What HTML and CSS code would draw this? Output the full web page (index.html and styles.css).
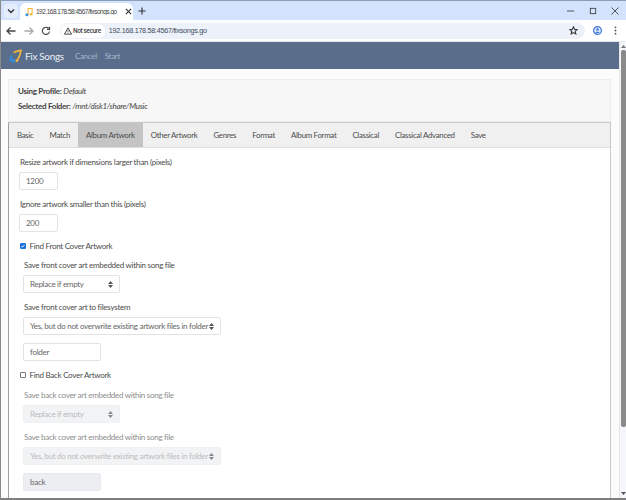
FILE: index.html
```html
<!DOCTYPE html>
<html lang="en">
<head>
<meta charset="utf-8">
<title>Fix Songs</title>
<link rel="stylesheet" href="styles.css">
</head>
<body>
<div class="window">
  <div class="tabstrip">
    <div class="tabmenu"><svg width="8" height="6" viewBox="0 0 8 6"><path d="M1 1.500l3 3 3-3" fill="none" stroke="#333" stroke-width="1.400"/></svg></div>
    <div class="browser-tab">
      <svg class="favicon" width="8" height="10" viewBox="0 0 9 11"><path d="M3.500 8V1.500h4.500v6" fill="none" stroke="#f2b632" stroke-width="1.200"/><circle cx="2.200" cy="8.500" r="1.700" fill="#3d8fd8"/><circle cx="6.800" cy="8" r="1.500" fill="#f2b632"/></svg>
      <span class="tab-title">192.168.178.58:4567/fixsongs.go</span>
      <svg class="tab-close" width="7" height="7" viewBox="0 0 8 8"><path d="M1 1l6 6M7 1l-6 6" stroke="#333" stroke-width="1.300"/></svg>
    </div>
    <svg class="newtab" width="8" height="8" viewBox="0 0 9 9"><path d="M4.500 0.500v8M0.500 4.500h8" stroke="#333" stroke-width="1.300"/></svg>
    <div class="winctl">
      <svg width="8" height="8" viewBox="0 0 9 9"><path d="M0 4.500h8" stroke="#444" stroke-width="1"/></svg>
      <svg width="8" height="8" viewBox="0 0 9 9"><rect x="1.500" y="1.500" width="6" height="6" fill="none" stroke="#444" stroke-width="1"/></svg>
      <svg width="8" height="8" viewBox="0 0 9 9"><path d="M.5 .5l8 8M8.500 .5l-8 8" stroke="#444" stroke-width="1"/></svg>
    </div>
  </div>
  <div class="toolbar">
    <svg width="10" height="10" viewBox="0 0 10 10"><path d="M9.500 5H1M4.500 1.500L1 5l3.500 3.500" fill="none" stroke="#444" stroke-width="1.300"/></svg>
    <svg width="10" height="10" viewBox="0 0 10 10"><path d="M.5 5H9M5.500 1.500L9 5 5.500 8.500" fill="none" stroke="#a8a8a8" stroke-width="1.300"/></svg>
    <svg width="10" height="10" viewBox="0 0 10 10"><path d="M8.500 5.500A3.600 3.600 0 1 1 7.500 2.300M8.500 .8v2.500H6" fill="none" stroke="#444" stroke-width="1.200"/></svg>
    <div class="omnibox">
      <div class="secure">
        <svg width="8" height="8" viewBox="0 0 9 9"><path d="M4.500 1L.5 8h8z" fill="none" stroke="#333" stroke-width="1"/><path d="M4.500 3.500v2.200M4.500 6.300v.8" stroke="#333" stroke-width=".8"/></svg>
        <span>Not secure</span>
      </div>
      <span class="url">192.168.178.58:4567/fixsongs.go</span>
      <svg class="star" width="9" height="9" viewBox="0 0 10 10"><path d="M5 1l1.200 2.700 2.900.3-2.200 1.900.7 2.900L5 7.300 2.400 8.800l.7-2.900L.9 4l2.900-.3z" fill="none" stroke="#333" stroke-width="1.200"/></svg>
    </div>
    <svg class="profile" width="9" height="9" viewBox="0 0 11 11"><circle cx="5.500" cy="5.500" r="4.800" fill="#dbe6fb" stroke="#3f78d8" stroke-width="1.400"/><circle cx="5.500" cy="4.200" r="1.500" fill="#3f78d8"/><path d="M2.800 8.500c.8-2 4.600-2 5.400 0" fill="#3f78d8"/></svg>
    <svg class="kebab" width="3" height="9" viewBox="0 0 3 10"><circle cx="1.500" cy="1.500" r="1" fill="#555"/><circle cx="1.500" cy="5" r="1" fill="#555"/><circle cx="1.500" cy="8.500" r="1" fill="#555"/></svg>
  </div>
  <div class="viewport">
    <div class="page">
      <nav class="navbar">
        <svg class="logo" width="13" height="14" viewBox="0 0 14 15"><path d="M5 4C7 2.500 10 2 13 1.500C12.500 5 11 9 8.500 13" fill="none" stroke="#f0b43a" stroke-width="1.800"/><path d="M3.500 7C2 9 1 11 1 13" fill="none" stroke="#2f8fe0" stroke-width="2"/><circle cx="4.500" cy="12.500" r="2" fill="#2f8fe0"/><circle cx="8.500" cy="12.500" r="1.500" fill="#f0b43a"/></svg>
        <span class="brand">Fix Songs</span>
        <a class="navlink">Cancel</a>
        <a class="navlink">Start</a>
      </nav>
      <div class="container">
        <section class="summary">
          <p><b>Using Profile:</b> <i>Default</i></p>
          <p><b>Selected Folder:</b> <i>/mnt/disk1/share/Music</i></p>
        </section>
        <section class="panel">
          <div class="tabs">
            <a>Basic</a><a>Match</a><a class="active">Album Artwork</a><a>Other Artwork</a><a>Genres</a><a>Format</a><a>Album Format</a><a>Classical</a><a>Classical Advanced</a><a>Save</a>
          </div>
          <div class="tabbody">
            <label class="lbl">Resize artwork if dimensions larger than (pixels)</label>
            <input class="ctl w-num" value="1200">
            <label class="lbl">Ignore artwork smaller than this (pixels)</label>
            <input class="ctl w-num" value="200">
            <label class="check"><input type="checkbox" checked> Find Front Cover Artwork</label>
            <div class="group">
              <label class="lbl">Save front cover art embedded within song file</label>
              <select class="ctl sel w-short"><option>Replace if empty</option></select>
              <label class="lbl">Save front cover art to filesystem</label>
              <select class="ctl sel w-long"><option>Yes, but do not overwrite existing artwork files in folder</option></select>
              <input class="ctl w-name" value="folder">
            </div>
            <label class="check"><input type="checkbox"> Find Back Cover Artwork</label>
            <div class="group off">
              <label class="lbl">Save back cover art embedded within song file</label>
              <select class="ctl sel w-short" disabled><option>Replace if empty</option></select>
              <label class="lbl">Save back cover art embedded within song file</label>
              <select class="ctl sel w-long" disabled><option>Yes, but do not overwrite existing artwork files in folder</option></select>
              <input class="ctl w-name" value="back" disabled>
            </div>
          </div>
        </section>
      </div>
    </div>
    <div class="scrollbar">
      <svg width="7" height="5" viewBox="0 0 7 5"><path d="M3.500 1L1 4h5z" fill="#777"/></svg>
      <div class="thumb"></div>
      <svg width="7" height="5" viewBox="0 0 7 5"><path d="M3.500 4L1 1h5z" fill="#555"/></svg>
    </div>
  </div>
</div>
</body>
</html>
```

FILE: styles.css
```css
* { box-sizing: border-box; }
html, body { margin: 0; padding: 0; height: 100%; overflow: hidden; }
body { font-family: "Lato", "Liberation Sans", sans-serif; color: #4a4a4a; }
.window {
  width: 626px; height: 500px; display: flex; flex-direction: column;
  border-top: 1px solid #8f9fb3; border-left: 1px solid #8a8a8a; border-bottom: 2px solid #7f7f7f;
  background: #fff; overflow: hidden;
}
.tabstrip { height: 19px; flex: none; background: #d3e3fd; display: flex; align-items: center; padding-left: 3px; }
.tabmenu { width: 14px; height: 14px; border-radius: 4px; background: #e4edfc; display: flex; align-items: center; justify-content: center; }
.browser-tab {
  width: 113px; height: 17px; margin-top: 2px; margin-left: 2px; background: #fff; border-radius: 6px 6px 0 0;
  display: flex; align-items: center; padding-left: 5px; gap: 3px;
}
.favicon { flex: none; }
.tab-title { font: 6.5px "Liberation Sans", sans-serif; letter-spacing: -0.5px; color: #444; width: 84px; white-space: nowrap; overflow: hidden; }
.tab-close { margin-left: 2px; flex: none; }
.newtab { margin-left: 5px; }
.winctl { margin-left: auto; display: flex; gap: 14px; padding-right: 7px; }
.toolbar { height: 22px; flex: none; background: #fff; display: flex; align-items: center; padding-left: 5px; gap: 7.5px; border-bottom: 1px solid #e3e8ef; }
.omnibox { margin-left: 1.5px; width: 525px; height: 16px; background: #edf2fa; border-radius: 8px; display: flex; align-items: center; padding: 0 0 0 1px; }
.secure { height: 14px; background: #fff; border-radius: 7px; display: flex; align-items: center; gap: 1px; padding: 0 4px 0 3px; font: 500 6.5px "Roboto", sans-serif; letter-spacing: -0.38px; color: #444; }
.url { margin-left: 4px; font: 7.2px "Liberation Sans", sans-serif; letter-spacing: -0.27px; color: #3c4b5c; }
.star { margin-left: auto; margin-right: 7.5px; }
.kebab { margin-left: 4.5px; }
.viewport { flex: 1; min-height: 0; display: flex; }
.page { flex: 1; min-width: 0; overflow: hidden; background: #fbfbfb; }
.scrollbar { width: 7px; flex: none; background: #f4f6fb; display: flex; flex-direction: column; align-items: center; justify-content: space-between; padding: 2px 0; border-left: 1px solid #e6e6e6; }
.thumb { width: 5px; height: 377px; margin-bottom: auto; background: #8a8a8a; border-radius: 2px; margin-top: 1px; }
.navbar { height: 27px; background: #5a6e8c; display: flex; align-items: center; padding-left: 8px; }
.brand { margin-left: 3px; font-size: 10px; letter-spacing: -0.32px; color: #e8edf3; }
.navlink { margin-left: 8px; font-size: 8px; letter-spacing: -0.3px; color: #a7b4c6; }
.navlink:first-of-type { margin-left: 11px; }
.container { padding: 10px 8px 0 7px; }
.summary { height: 43px; background: #f7f7f7; border: 1px solid #eee; padding: 6px 9px; font-size: 8px; letter-spacing: -0.28px; color: #444; }
.summary p { margin: 0 0 4px; line-height: 11px; }
.panel { border: 1px solid #c8c8c8; border-left-color: #a0a0a0; background: #fff; }
.tabs { height: 25px; background: #f0f0f0; border-bottom: 1px solid #ddd; display: flex; font-size: 7.9px; letter-spacing: -0.31px; }
.tabs a { padding: 0 8px; line-height: 25px; color: #4c4c4c; }
.tabs a.active { background: #c4c4c4; }
.tabbody { padding: 8px 0 0 11px; }
.lbl { display: block; font-size: 8px; letter-spacing: -0.28px; line-height: 12px; color: #4c4c4c; margin-bottom: 4px; }
.ctl { display: block; height: 18px; margin-left: -1px; font: 8px "Lato", sans-serif; letter-spacing: -0.28px; color: #666; background: #fff; border: 1px solid #e3e3e3; border-radius: 2px; padding: 0 6px; margin-bottom: 8px; }
.w-num { width: 39px; }
.w-short { width: 97px; }
.w-long { width: 198px; }
.w-name { width: 78px; }
.sel { appearance: none; -webkit-appearance: none; padding-right: 10px; background-image: url("data:image/svg+xml,%3Csvg xmlns='http://www.w3.org/2000/svg' width='5' height='7'%3E%3Cpath d='M2.500 0L5 3H0zM2.500 7L0 4h5z' fill='%23555'/%3E%3C/svg%3E"); background-repeat: no-repeat; background-position: right 6px center; }
.check { display: flex; align-items: center; gap: 3.5px; font-size: 8px; letter-spacing: -0.28px; line-height: 12px; color: #4c4c4c; margin: 0 0 7px; }
.check input { appearance: none; -webkit-appearance: none; margin: 0; width: 6px; height: 6px; border: 1px solid #777; border-radius: 1px; background: #fff; flex: none; }
.check input:checked { border-color: #1a6fe0; background: #1a6fe0 url("data:image/svg+xml,%3Csvg xmlns='http://www.w3.org/2000/svg' width='4' height='4'%3E%3Cpath d='M.5 2l1 1.200L3.500 .8' fill='none' stroke='%23fff' stroke-width='.9'/%3E%3C/svg%3E") center no-repeat; }
.group { padding-left: 4px; }
.off { margin-top: 8px; }
.off .lbl { color: #8d8d8d; }
.off .ctl { background-color: #eceef1; border-color: #e8eaed; color: #a0a0a0; }
.off input.ctl { color: #666; }
```
